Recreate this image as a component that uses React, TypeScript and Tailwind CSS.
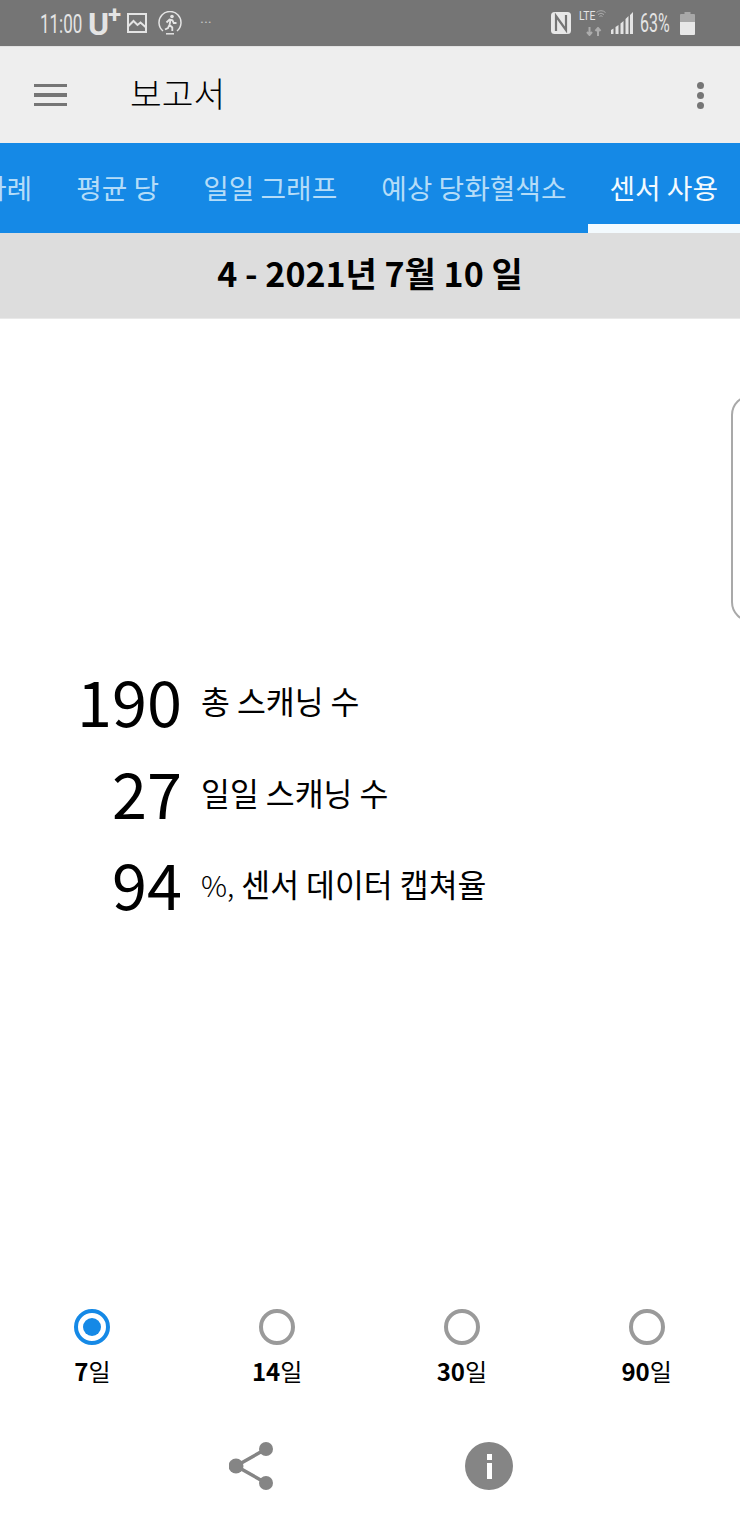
import React from 'react';

const tabs = ['사례', '평균 당', '일일 그래프', '예상 당화혈색소', '센서 사용'];

const stats = [
  { value: '190', prefix: '', label: '총 스캐닝 수' },
  { value: '27', prefix: '', label: '일일 스캐닝 수' },
  { value: '94', prefix: '%,', label: ' 센서 데이터 캡쳐율' },
];

const ranges = [
  { days: '7', selected: true },
  { days: '14', selected: false },
  { days: '30', selected: false },
  { days: '90', selected: false },
];

const StatusBar: React.FC = () => (
  <div className="h-[46px] flex-none bg-[#757575] flex items-center text-[#e4e4e4] font-['Roboto',sans-serif]">
    <span className="ml-[40px] w-[48px] mt-[2px] text-[25px] leading-none scale-x-[0.68] origin-left whitespace-nowrap">11:00</span>
    <span className="w-[39px] text-[32px] font-bold leading-none mt-[2px] relative">
      U
      <span className="absolute left-[20px] top-[-5px] text-[24px]">+</span>
    </span>
    <svg width="20" height="20" viewBox="0 0 20 20" fill="none" stroke="currentColor" strokeWidth="2">
      <rect x="1" y="1" width="18" height="18" />
      <path d="M1.500 13l5-5 4 4 3-2.500 5 4.500" />
    </svg>
    <svg width="24" height="24" viewBox="0 0 24 24" className="ml-[11px]" fill="none" stroke="currentColor" strokeWidth="1.500">
      <path d="M5 20A11 11 0 1 1 19 20" />
      <path d="M8 22.800h8" />
      <circle cx="14" cy="5.500" r="1.800" fill="currentColor" stroke="none" />
      <path d="M8.500 11.500l3-3 3 .8 1.200 2.700h2.800M12.500 9l-1 5 2.800 2.500V20M11 14.500l-1 2.500-3 1.500" strokeWidth="1.800" />
    </svg>
    <span className="ml-[18px] text-[15px] leading-none text-[#c4c4c4]">···</span>
    <div className="ml-auto mr-[45px] flex items-center">
      <svg width="20" height="22" viewBox="0 0 20 22">
        <rect width="20" height="22" rx="3.500" fill="#e8e8e8" />
        <path d="M5 19V4l10 14V3" fill="none" stroke="#757575" strokeWidth="2.200" />
      </svg>
      <div className="ml-[8px] w-[27px] h-[24px] relative">
        <span className="absolute left-0 top-[-2px] text-[13px] leading-[14px] scale-x-[0.8] origin-left whitespace-nowrap">LTE</span>
        <svg width="10" height="10" viewBox="0 0 10 10" className="absolute right-0 top-[-2px]" fill="none" stroke="#acacac" strokeWidth="1">
          <path d="M.5 3.500a6.500 6.500 0 0 1 9 0M2 5.500a4.500 4.500 0 0 1 6 0M3.500 7.500a2 2 0 0 1 3 0" />
        </svg>
        <svg width="16" height="9" viewBox="0 0 16 9" className="absolute left-[7px] bottom-[-1px]" fill="none" stroke="#acacac" strokeWidth="2">
          <path d="M3.500 0v7M1 5l2.500 3L6 5M12 9V2M9.500 4L12 1l2.500 3" />
        </svg>
      </div>
      <svg width="22" height="22" viewBox="0 0 22 22" fill="currentColor" className="ml-[5px]">
        <path d="M0 18l2.500-1.500V22H0zM4.500 15l3-2v9h-3zM9.500 11.500l3-2.500v13h-3zM14.500 7l3-3v18h-3zM19 3l3-3v22h-3z" />
      </svg>
      <span className="ml-[7px] w-[33px] mt-[1px] text-[25px] leading-none scale-x-[0.64] origin-left whitespace-nowrap">63%</span>
      <svg width="15" height="23" viewBox="0 0 15 23" className="ml-[7px]">
        <path d="M4.500 0h6v2H14a1 1 0 0 1 1 1v7H0V3a1 1 0 0 1 1-1h3.500z" fill="#a8a8a8" />
        <path d="M0 10h15v12a1 1 0 0 1-1 1H1a1 1 0 0 1-1-1z" fill="#e8e8e8" />
      </svg>
    </div>
  </div>
);

const App: React.FC = () => (
  <div className="w-[740px] h-[1516px] overflow-hidden bg-white flex flex-col relative font-['Noto_Sans_CJK_KR','Noto_Sans',sans-serif]">
    <StatusBar />

    <header className="h-[97px] flex-none bg-[#eeeeee] flex items-center border-t border-[#e2e2e2]">
      <div className="ml-[34px] w-[33px] flex flex-col gap-[6px]">
        <div className="h-[3.500px] bg-[#757575]" />
        <div className="h-[3.500px] bg-[#757575]" />
        <div className="h-[3.500px] bg-[#757575]" />
      </div>
      <h1 className="ml-[63px] mb-[6px] text-[34.500px] leading-none font-light text-black">보고서</h1>
      <div className="ml-auto mr-[36px] flex flex-col gap-[3px]">
        <div className="w-[7px] h-[7px] rounded-full bg-[#757575]" />
        <div className="w-[7px] h-[7px] rounded-full bg-[#757575]" />
        <div className="w-[7px] h-[7px] rounded-full bg-[#757575]" />
      </div>
    </header>

    <nav className="h-[90px] flex-none bg-[#1589e6] flex justify-end overflow-hidden">
      {tabs.map((tab) => {
        const active = tab === '센서 사용';
        return (
          <div
            key={tab}
            className={
              active
                ? "flex-none pl-[21px] pr-[22px] pt-[22px] text-[27.800px] leading-[44px] whitespace-nowrap text-[#f3fafe] border-b-[9px] border-[#f3fafe]"
                : "flex-none px-[22px] pt-[22px] text-[27.800px] leading-[44px] whitespace-nowrap text-[#b4dcf8]"
            }
          >
            {tab}
          </div>
        );
      })}
    </nav>

    <div className="h-[86px] flex-none bg-[#dddddd] flex items-center justify-center pb-[6px] text-[34px] font-bold text-black border-b border-[#e9e9e9]">
      4 - 2021년 7월 10 일
    </div>

    <main className="flex-1 pt-[335px]">
      {stats.map((stat) => (
        <div key={stat.value} className="h-[91.500px] flex items-center">
          <span className="w-[182px] text-right text-[63px] leading-none text-black">{stat.value}</span>
          <span className="ml-[19px] mt-[2px] text-[31.400px] leading-none text-black whitespace-pre">
            {stat.prefix && <span className="text-[29px] font-light">{stat.prefix}</span>}
            {stat.label}
          </span>
        </div>
      ))}
    </main>

    <div className="grid grid-cols-4 pr-[1px]">
      {ranges.map((range) => (
        <div key={range.days} className="flex flex-col items-center">
          <div
            className={
              range.selected
                ? "w-[36px] h-[36px] rounded-full border-[4px] border-[#1589e6] flex items-center justify-center"
                : "w-[36px] h-[36px] rounded-full border-[4px] border-[#9a9a9a]"
            }
          >
            {range.selected && <div className="w-[18px] h-[18px] rounded-full bg-[#1589e6]" />}
          </div>
          <div className="mt-[11px] text-[24px] leading-[30px] text-black">
            <span className="font-bold">{range.days}</span>일
          </div>
        </div>
      ))}
    </div>

    <div className="mt-[56px] mb-[26px] pl-[2px] flex justify-center gap-[192px]">
      <svg width="44" height="48" viewBox="0 0 44 48" className="text-[#858585]" fill="currentColor" stroke="currentColor">
        <path d="M37 7L7 24L37 41" fill="none" strokeWidth="3.500" />
        <circle cx="37" cy="7" r="7" stroke="none" />
        <circle cx="7" cy="24" r="7.500" stroke="none" />
        <circle cx="37" cy="41" r="7" stroke="none" />
      </svg>
      <div className="w-[48px] h-[48px] rounded-full bg-[#858585] flex flex-col items-center justify-center gap-[3px]">
        <div className="w-[5px] h-[6px] bg-white" />
        <div className="w-[5px] h-[16px] bg-white" />
      </div>
    </div>

    <div className="absolute right-[-31px] top-[395px] w-[40px] h-[227px] border-2 border-[#a9a9a9] rounded-[26px]" />
  </div>
);

export default App;
